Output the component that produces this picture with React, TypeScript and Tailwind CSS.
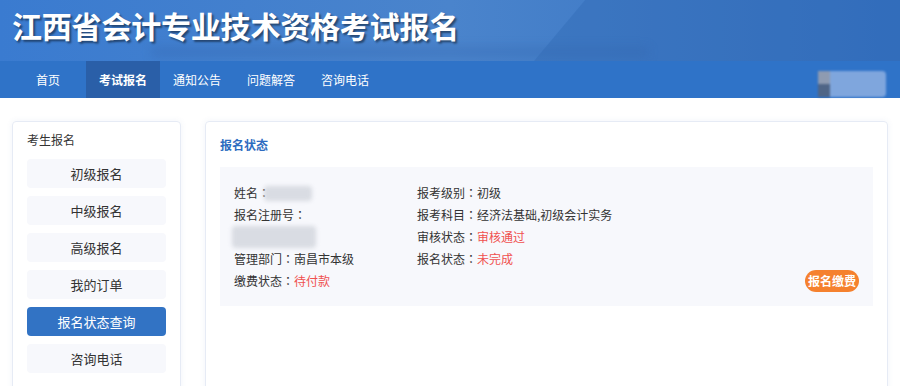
import React from "react";

const font = { fontFamily: '"Noto Sans CJK SC", "Noto Sans", sans-serif' };

const navItems = ["首页", "考试报名", "通知公告", "问题解答", "咨询电话"];
const sideItems = ["初级报名", "中级报名", "高级报名", "我的订单", "报名状态查询", "咨询电话"];

const Blur = ({ className }: { className: string }) => (
    <div className={`bg-gray-300/80 blur-[2px] rounded-sm ${className}`} />
);

// centered full-width colon like the original font
const Colon = () => <span className="[font-family:'Noto_Sans_CJK_JP',sans-serif]">：</span>;

export default function App() {
    return (
        <div className="w-[900px] h-[386px] overflow-hidden bg-white text-[#333]" style={font}>
            {/* Banner */}
            <div className="relative h-[61px] bg-gradient-to-r from-[#3a7bd0] via-[#4a84cc] to-[#3470c0] overflow-hidden">
                <div className="absolute left-[560px] top-[-40px] w-[400px] h-[140px] bg-[#2f69b5]/40 -skew-x-[40deg]" />
                <div className="absolute left-[150px] top-[46px] w-[500px] h-[12px] bg-[#3468b0]/30 blur-[4px] rounded-full" />
                <h1 className="relative pl-[12px] pt-[5px] text-[30px] leading-[40px] font-bold text-white tracking-[-0.2px] [text-shadow:2px_2px_2px_rgba(0,0,0,0.45)]">
                    江西省会计专业技术资格考试报名
                </h1>
            </div>

            {/* Nav */}
            <div className="relative h-[37px] bg-[#2f73c8] flex items-stretch pl-[10px]">
                {navItems.map((item, i) => (
                    <div
                        key={item}
                        className={`flex items-center text-[12px] text-white ${i === 0 ? "px-[26px]" : "px-[13px]"} ${i === 1 ? "bg-[#2a5fa8] font-bold" : ""}`}
                    >
                        {item}
                    </div>
                ))}
                <div className="absolute left-[818px] top-[10px] w-[68px] h-[26px] flex blur-[1px]">
                    <div className="w-[12px] h-full flex flex-col">
                        <div className="flex-1 bg-[#8e9bb1]" />
                        <div className="flex-1 bg-[#4f6586]" />
                    </div>
                    <div className="flex-1 bg-[#7fa6dd] rounded-r" />
                </div>
            </div>

            {/* Body */}
            <div className="flex gap-[24px] px-[12px] pt-[23px]">
                {/* Sidebar */}
                <div className="w-[169px] h-[280px] border border-[#e6ebf5] rounded shadow-[0_0_6px_rgba(80,110,180,0.08)] px-[14px] pt-[9px]">
                    <div className="text-[12px] leading-[18px] mb-[10px]">考生报名</div>
                    <div className="flex flex-col gap-[8px]">
                        {sideItems.map((item) => (
                            <div
                                key={item}
                                className={`h-[29px] rounded flex items-center justify-center text-[13px] ${item === "报名状态查询" ? "bg-[#3273c4] text-white" : "bg-[#f7f8fc] text-[#333]"}`}
                            >
                                {item}
                            </div>
                        ))}
                    </div>
                </div>

                {/* Main */}
                <div className="flex-1 h-[280px] border border-[#e6ebf5] rounded shadow-[0_0_6px_rgba(80,110,180,0.08)] px-[14px] pt-[14px]">
                    <div className="text-[12px] leading-[18px] font-bold text-[#2d6cc0] mb-[13px]">报名状态</div>
                    <div className="relative h-[139px] bg-[#f7f8fc] pl-[14px] pt-[15px] text-[12px] leading-[22px] flex">
                        <div className="w-[183px]">
                            <div className="flex items-center">
                                姓名<Colon /><Blur className="w-[48px] h-[15px] -ml-[6px]" />
                            </div>
                            <div>报名注册号<Colon /></div>
                            <Blur className="w-[84px] h-[22px] -ml-[2px]" />
                            <div>管理部门<Colon />南昌市本级</div>
                            <div>
                                缴费状态<Colon /><span className="text-[#f0504f]">待付款</span>
                            </div>
                        </div>
                        <div>
                            <div>报考级别<Colon />初级</div>
                            <div>报考科目<Colon />经济法基础,初级会计实务</div>
                            <div>
                                审核状态<Colon /><span className="text-[#f0504f]">审核通过</span>
                            </div>
                            <div>
                                报名状态<Colon /><span className="text-[#f0504f]">未完成</span>
                            </div>
                        </div>
                        <div className="absolute right-[14px] bottom-[14px] h-[22px] px-[3px] rounded-full bg-[#f5812e] text-white text-[12px] font-bold flex items-center">
                            报名缴费
                        </div>
                    </div>
                </div>
            </div>
        </div>
    );
}
